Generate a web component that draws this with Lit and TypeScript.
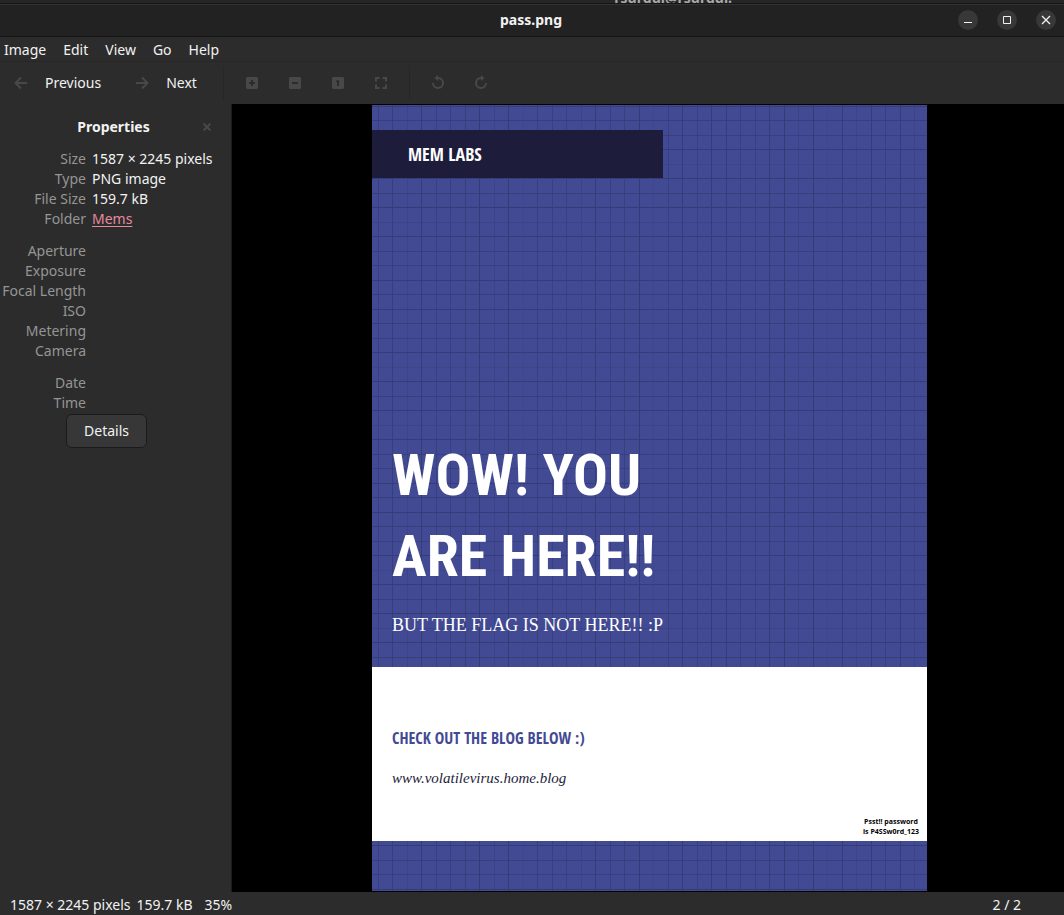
import { LitElement, html, svg, css } from "lit";
import { customElement } from "lit/decorators.js";

const STEP = 14.5;
const COLUMN_TONES = [
  0.6, 0.8, 0.4, 0.9, 0.6, 0.6, 0.8, 1, 0.4, 1, 0.2, 0.7, 0.6, 0.6, 0.4, 0.9, 0.6, 0.6, 1,
  0.2, 0.6, 0.9, 0.6, 0.9, 0.9, 0.6, 0.6, 0.9, 1, 0.4, 1, 0.2, 0.9, 0.4, 0.9, 0.6, 0.9, 0.4,
];
const ROW_TONES = [0.9, 0.8, 0.6, 0.9, 0.3, 0.9, 0.7, 1, 0.4, 0.9, 0.7, 0.6, 0.9, 0.8];

@customElement("poster-grid")
class PosterGrid extends LitElement {
  static styles = css`
    :host { display: block; overflow: hidden; background: #424a94; }
    svg { display: block; width: 100%; height: 100%; }
  `;

  render() {
    const steps = Array.from({ length: 60 }, (_, i) => i);
    return html`<svg aria-hidden="true" shape-rendering="crispEdges" fill="#343b76">
      ${steps.map((i) => svg`<rect x=${Math.floor(6 + i * STEP)} y="0" width="1" height="100%" opacity=${COLUMN_TONES[i % COLUMN_TONES.length]}></rect>`)}
      ${steps.map((i) => svg`<rect x="0" y=${Math.floor(1 + i * STEP)} width="100%" height="1" opacity=${ROW_TONES[i % ROW_TONES.length]}></rect>`)}
    </svg>`;
  }
}

@customElement("image-poster")
class ImagePoster extends LitElement {
  static styles = css`
    :host { display: grid; width: 555px; max-width: 100%; }
    poster-grid, .art { grid-area: 1 / 1; min-height: 0; }
    .art { display: flex; flex-direction: column; padding: 25px 0 50px; position: relative; }
    .badge {
      display: flex; align-items: center; box-sizing: border-box; width: 291px; height: 48px;
      padding-left: 36px; background: #1d1d3b; color: #fff;
      font: bold 18px/20px "Open Sans Condensed", "Roboto Condensed", sans-serif;
    }
    h1 {
      margin: auto 0 0; padding-left: 20px; color: #fff;
      font: bold 58px/81px "Roboto Condensed", "Open Sans Condensed", sans-serif;
    }
    .sub { margin: 16px 0 30px; padding-left: 20px; color: #fff; font: 18px/24px "Liberation Serif", serif; }
    .card {
      display: flex; flex-direction: column; box-sizing: border-box; height: 174px;
      padding: 58px 8px 4px 20px; background: #fff;
    }
    h2 { margin: 0; color: #424a94; font: bold 16px/26px "Open Sans Condensed", "Roboto Condensed", sans-serif; }
    .site { margin-top: 15px; color: #1d1d3b; font: italic 15px/24px "Liberation Serif", serif; text-decoration: none; }
    .hint { margin: auto 0 0 auto; color: #000; text-align: center; font: bold 7px/10px "Open Sans", sans-serif; }
  `;

  render() {
    return html`
      <poster-grid></poster-grid>
      <div class="art">
        <div class="badge">MEM LABS</div>
        <h1>WOW! YOU<br />ARE HERE!!</h1>
        <p class="sub">BUT THE FLAG IS NOT HERE!! :P</p>
        <div class="card">
          <h2>CHECK OUT THE BLOG BELOW :)</h2>
          <a class="site" href="#blog">www.volatilevirus.home.blog</a>
          <p class="hint">Psst!! password<br />is P4SSw0rd_123</p>
        </div>
      </div>
    `;
  }
}

const ICONS = {
  back: svg`<path d="M14 8H3M8 2.500L2.500 8L8 13.500" fill="none" stroke="currentColor" stroke-width="2"/>`,
  forward: svg`<path d="M2 8H13M8 2.500L13.500 8L8 13.500" fill="none" stroke="currentColor" stroke-width="2"/>`,
  zoomIn: svg`<path fill-rule="evenodd" fill="currentColor" d="M3 2H13L14 3V13L13 14H3L2 13V3ZM7 5V7H5V9H7V11H9V9H11V7H9V5Z"/>`,
  zoomOut: svg`<path fill-rule="evenodd" fill="currentColor" d="M3 2H13L14 3V13L13 14H3L2 13V3ZM5 7V9H11V7Z"/>`,
  actual: svg`<path fill-rule="evenodd" fill="currentColor" d="M3 2H13L14 3V13L13 14H3L2 13V3ZM8 5L6 6V7H7V11H9V5Z"/>`,
  fit: svg`<path fill="none" stroke="currentColor" stroke-width="2" d="M3 6.500V3H6.500M9.500 3H13V6.500M13 9.500V13H9.500M6.500 13H3V9.500"/>`,
  left: svg`<path fill="none" stroke="currentColor" stroke-width="2" d="M3 8A5 5 0 1 0 8 3H6"/><path fill="currentColor" d="M8 0V6L4.500 3Z"/>`,
  right: svg`<path fill="none" stroke="currentColor" stroke-width="2" d="M13 8A5 5 0 1 1 8 3H10"/><path fill="currentColor" d="M8 0V6L11.500 3Z"/>`,
  close: svg`<path fill="none" stroke="currentColor" stroke-width="2" d="M4.500 4.500L11.500 11.500M11.500 4.500L4.500 11.500"/>`,
  winMin: svg`<path fill="currentColor" d="M4 10H12V11H4Z"/>`,
  winMax: svg`<path fill="none" stroke="currentColor" d="M4.500 4.500H11.500V11.500H4.500Z"/>`,
  winClose: svg`<path fill="none" stroke="currentColor" stroke-width="1.300" d="M4 4L12 12M12 4L4 12"/>`,
};

const icon = (name: keyof typeof ICONS) =>
  html`<svg class="icon" viewBox="0 0 16 16" width="16" height="16" aria-hidden="true">${ICONS[name]}</svg>`;

const FACTS: [string, unknown][][] = [
  [
    ["Size", "1587 × 2245 pixels"],
    ["Type", "PNG image"],
    ["File Size", "159.7 kB"],
    ["Folder", html`<a href="#mems">Mems</a>`],
  ],
  [["Aperture", ""], ["Exposure", ""], ["Focal Length", ""], ["ISO", ""], ["Metering", ""], ["Camera", ""]],
  [["Date", ""], ["Time", ""]],
];

@customElement("app-root")
class AppRoot extends LitElement {
  static styles = css`
    :host {
      display: flex; flex-direction: column; min-height: 100vh; background: #2c2c2c; color: #f2f2f2;
      font: 14px/20px "Noto Sans", "Open Sans", sans-serif;
    }
    button { font: inherit; color: inherit; background: none; border: 0; padding: 0; }
    .icon { display: block; flex: none; }
    .behind {
      display: flex; align-items: flex-end; justify-content: center; height: 3px; overflow: hidden;
      padding-left: 294px; background: #262626; border-bottom: 1px solid #141414;
      color: #a8a8a8; font-weight: bold; line-height: 11px;
    }
    .titlebar {
      display: grid; grid-template-columns: 1fr auto 1fr; align-items: center; height: 31px;
      background: #222; border-top: 1px solid #333; border-bottom: 1px solid #151515;
    }
    .title { grid-column: 2; margin: 0; padding: 0 2px 2px 0; font-size: 14px; line-height: 20px; }
    .controls { display: flex; justify-content: flex-end; gap: 19px; padding: 0 8px 1px 0; }
    .controls button { display: grid; place-items: center; width: 20px; height: 20px; border-radius: 50%; background: #383838; }
    .menubar {
      display: flex; gap: 17px; box-sizing: border-box; height: 25px; padding: 2px 4px 0; align-items: center;
      border-bottom: 1px solid #272727;
    }
    .toolbar { display: flex; align-items: center; height: 42px; padding-left: 13px; }
    .toolbar .icon, .dismiss { color: #484848; }
    .nav { display: flex; align-items: center; gap: 16px; }
    .nav + .nav { margin: 0 26px 0 33px; }
    .rule { width: 1px; height: 34px; background: #272727; }
    .tools { display: flex; gap: 27px; padding: 0 20px; }
    .body { display: flex; flex: 1; }
    .side { box-sizing: border-box; width: 232px; flex: none; border-right: 1px solid #1c1c1c; padding-top: 13px; }
    .side header { display: flex; align-items: center; padding: 0 16px 0 28px; }
    h2 { flex: 1; margin: 0; text-align: center; font-size: 14px; line-height: 20px; }
    dl { display: grid; grid-template-columns: 86px 1fr; column-gap: 6px; margin: 12px 0 0; }
    dt { text-align: right; color: #959595; white-space: nowrap; justify-self: end; }
    dd { margin: 0; white-space: nowrap; }
    dd a { color: #e58a9e; text-underline-offset: 2px; }
    .details {
      display: block; box-sizing: border-box; width: 81px; height: 34px; margin: 1px 0 0 66px;
      background: #373737; border: 1px solid #1b1b1b; border-radius: 6px;
    }
    .stage { display: flex; flex: 1; min-width: 0; justify-content: center; padding: 1px 0 1px 3px; background: #000; }
    .status { display: flex; height: 23px; padding: 3px 43px 0 10px; box-sizing: border-box; }
    .status .zoom { margin-left: 12px; }
    .status .kb { margin-left: 6px; }
    .status .count { margin-left: auto; }
  `;

  render() {
    return html`
      <div class="behind" aria-hidden="true">rsurgul@rsurgul: ~</div>
      <header class="titlebar">
        <h1 class="title">pass.png</h1>
        <div class="controls">
          <button aria-label="Minimize">${icon("winMin")}</button>
          <button aria-label="Maximize">${icon("winMax")}</button>
          <button aria-label="Close">${icon("winClose")}</button>
        </div>
      </header>
      <nav class="menubar">
        ${["Image", "Edit", "View", "Go", "Help"].map((name) => html`<button>${name}</button>`)}
      </nav>
      <div class="toolbar" role="toolbar">
        <button class="nav">${icon("back")}Previous</button>
        <button class="nav">${icon("forward")}Next</button>
        <div class="rule"></div>
        <div class="tools">
          <button aria-label="Zoom in">${icon("zoomIn")}</button>
          <button aria-label="Zoom out">${icon("zoomOut")}</button>
          <button aria-label="Normal size">${icon("actual")}</button>
          <button aria-label="Best fit">${icon("fit")}</button>
        </div>
        <div class="rule"></div>
        <div class="tools">
          <button aria-label="Rotate left">${icon("left")}</button>
          <button aria-label="Rotate right">${icon("right")}</button>
        </div>
      </div>
      <div class="body">
        <aside class="side">
          <header>
            <h2>Properties</h2>
            <button class="dismiss" aria-label="Close panel">${icon("close")}</button>
          </header>
          ${FACTS.map((group) => html`<dl>${group.map(([name, value]) => html`<dt>${name}</dt><dd>${value}</dd>`)}</dl>`)}
          <button class="details">Details</button>
        </aside>
        <main class="stage"><image-poster></image-poster></main>
      </div>
      <footer class="status">
        <span>1587 × 2245 pixels</span><span class="kb">159.7 kB</span><span class="zoom">35%</span>
        <span class="count">2 / 2</span>
      </footer>
    `;
  }
}
